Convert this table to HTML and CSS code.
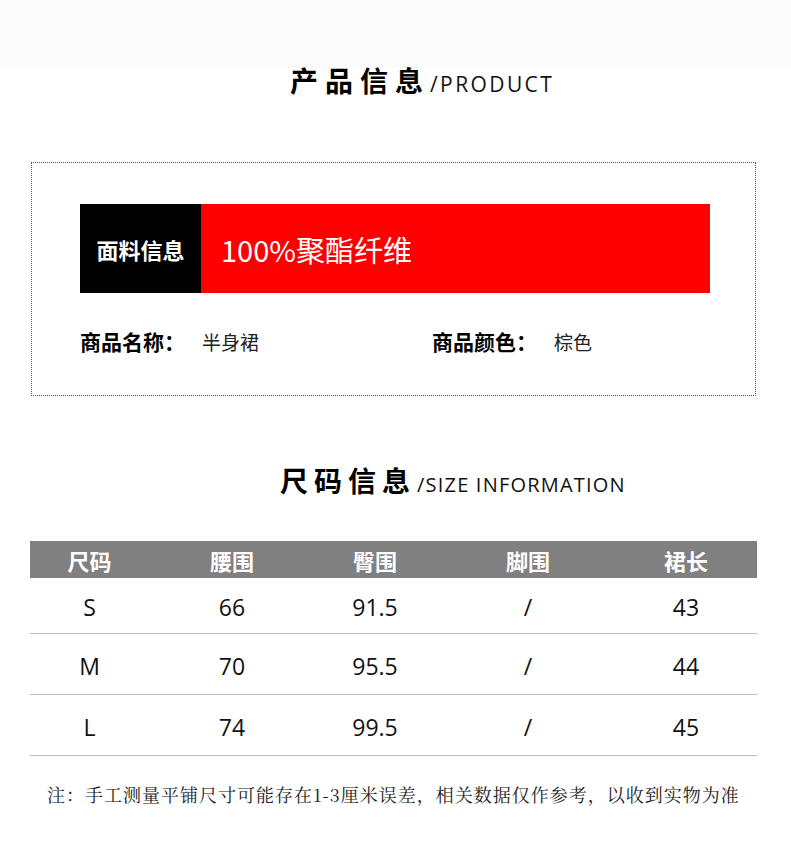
FILE: index.html
```html
<!DOCTYPE html>
<html lang="zh-CN">
<head>
<meta charset="utf-8">
<title>产品信息</title>
<link rel="stylesheet" href="styles.css">
</head>
<body>
<div class="topband"></div>

<div class="title title-product">
  <span class="title-cn">产品信息</span><span class="title-en en-product">/PRODUCT</span>
</div>

<div class="infobox">
  <div class="fabric">
    <div class="fabric-label">面料信息</div>
    <div class="fabric-value">100%聚酯纤维</div>
  </div>
  <div class="props">
    <div class="prop prop-name"><span class="prop-label">商品名称：</span><span class="prop-value">半身裙</span></div>
    <div class="prop"><span class="prop-label">商品颜色：</span><span class="prop-value">棕色</span></div>
  </div>
</div>

<div class="title title-size">
  <span class="title-cn cn-size">尺码信息</span><span class="title-en en-size">/SIZE INFORMATION</span>
</div>

<div class="sizetable">
  <div class="row head">
    <div>尺码</div><div>腰围</div><div>臀围</div><div>脚围</div><div>裙长</div>
  </div>
  <div class="row data first">
    <div>S</div><div>66</div><div>91.5</div><div>/</div><div>43</div>
  </div>
  <div class="row data">
    <div>M</div><div>70</div><div>95.5</div><div>/</div><div>44</div>
  </div>
  <div class="row data">
    <div>L</div><div>74</div><div>99.5</div><div>/</div><div>45</div>
  </div>
</div>

<p class="note">注：手工测量平铺尺寸可能存在1-3厘米误差，相关数据仅作参考，以收到实物为准</p>
</body>
</html>
```

FILE: styles.css
```css
* { box-sizing: border-box; }

html, body {
  margin: 0;
  padding: 0;
  background: #ffffff;
}

body {
  width: 791px;
  height: 867px;
  overflow: hidden;
  font-family: "Noto Sans CJK SC", "Noto Sans", sans-serif;
  color: #000;
}

.topband {
  height: 68px;
  background: #fbfbfb;
}

.title {
  display: flex;
  align-items: baseline;
  line-height: 24px;
  height: 24px;
}

.title-cn {
  font-size: 28px;
  font-weight: 700;
  letter-spacing: 7px;
}

.title-en {
  font-family: "Open Sans", "Liberation Sans", sans-serif;
  font-weight: 400;
  color: #111;
}

.title-product {
  padding-left: 290px;
}

.en-product {
  font-size: 21px;
  margin-left: 0;
  letter-spacing: 2.4px;
}

.title-size {
  padding-left: 280px;
  margin-top: 72px;
}

.cn-size {
  letter-spacing: 6px;
}

.en-size {
  font-size: 20px;
  margin-left: 1px;
  letter-spacing: 1.2px;
}

.infobox {
  margin: 70px 0 0 31px;
  width: 725px;
  height: 234px;
  border: 1px dotted #555;
  padding: 41px 0 0 48px;
}

.fabric {
  display: flex;
  width: 630px;
  height: 89px;
}

.fabric-label {
  width: 121px;
  background: #000;
  color: #fff;
  font-size: 22px;
  font-weight: 700;
  display: flex;
  align-items: center;
  justify-content: center;
}

.fabric-value {
  flex: 1;
  background: #ff0000;
  color: #fff;
  font-size: 29px;
  display: flex;
  align-items: center;
  padding-left: 20px;
}

.props {
  display: flex;
  margin-top: 33px;
  line-height: 30px;
}

.prop-name {
  width: 352px;
}

.prop-label {
  font-size: 21px;
  font-weight: 700;
}

.prop-value {
  font-size: 19px;
  color: #222;
  margin-left: 17px;
}

.sizetable {
  margin: 49px 0 0 30px;
  width: 727px;
}

.row {
  display: grid;
  grid-template-columns: 119px 166px 120px 186px 130px;
  align-items: center;
  text-align: center;
}

.head {
  height: 37px;
  background: #808080;
  color: #fff;
  font-size: 22px;
  font-weight: 700;
}

.data {
  height: 61px;
  border-bottom: 1px solid #bdbdbd;
  font-family: "Open Sans", "Noto Sans", sans-serif;
  font-size: 23px;
  color: #111;
  padding-top: 3px;
}

.data.first {
  height: 56px;
  padding-top: 2px;
}

.note {
  margin: 29px 0 0 47px;
  font-family: "Noto Serif CJK SC", "Noto Sans CJK SC", serif;
  font-size: 18px;
  line-height: 18px;
  letter-spacing: 1px;
  color: #222;
}
```
